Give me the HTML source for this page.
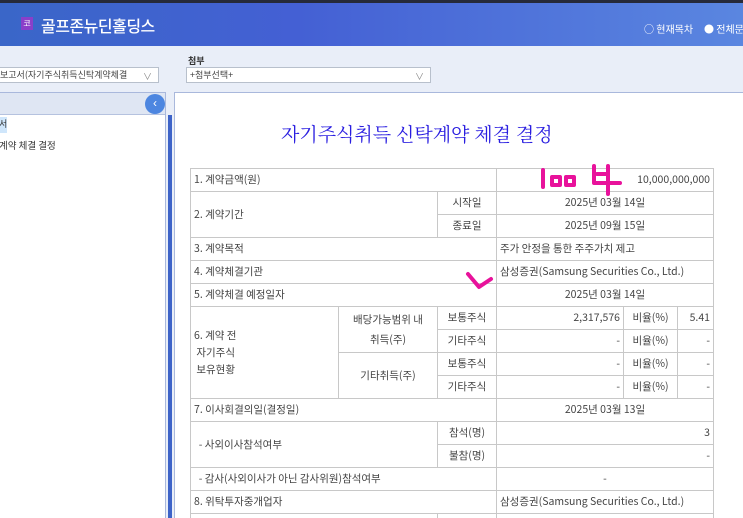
<!DOCTYPE html>
<html><head><meta charset="utf-8"><style>
*{margin:0;padding:0;box-sizing:border-box}
html,body{width:743px;height:518px;overflow:hidden}
body{background:#e9eef8;font-family:"Liberation Sans","Noto Sans CJK KR",sans-serif;position:relative}
.top{position:absolute;left:0;top:0;width:743px;height:46px;background:linear-gradient(90deg,#3a66c8 0%,#4460d4 40%,#5a86e0 100%);border-top:3px solid #262a3a}
.logo{position:absolute;left:21px;top:14px;width:12px;height:13px;background:#8a3fc9;color:#fff;font-size:8px;text-align:center;line-height:13px}
.ttl{position:absolute;left:41px;top:10px;color:#fff;font-size:16px;font-family:"Noto Sans CJK KR",sans-serif;font-weight:500;letter-spacing:-0.5px}
.rad{position:absolute;top:18px;color:#fff;font-size:10px;font-family:"Noto Sans CJK KR",sans-serif;white-space:nowrap}
.sel{position:absolute;background:#fff;border:1px solid #b8c0cc;height:16px;font-size:9px;color:#444;line-height:14px;padding-left:3px;font-family:"Noto Sans CJK KR",sans-serif;white-space:nowrap;overflow:hidden}
.sel i{position:absolute;right:6px;top:2px;font-style:normal;color:#888;font-size:9px}
.lp{position:absolute;left:-2px;top:92px;width:168px;height:430px;background:#fff;border:1px solid #a9b8dc}
.lph{height:22px;background:#dfe6f3;border-bottom:1px solid #b5c2df}
.cp{position:absolute;left:174px;top:92px;width:575px;height:430px;background:#fff;border:1px solid #a9b8dc}
table{position:absolute;left:190px;top:168px;border-collapse:collapse;font-family:"Noto Sans CJK KR",sans-serif;font-size:10.5px;color:#444}
td{border:1px solid #c8c8c8;height:23px;padding:0 3px;white-space:nowrap;line-height:12px}
.r{text-align:right}.c{text-align:center}
</style></head><body>
<div class="top">
<div class="logo">코</div>
<div class="ttl">골프존뉴딘홀딩스</div>
<div class="rad" style="left:644px">○ 현재목차</div>
<div class="rad" style="left:704px">● 전체문</div>
</div>
<div style="position:absolute;left:188px;top:54px;font-size:9px;font-weight:bold;color:#333;font-family:'Noto Sans CJK KR',sans-serif">첨부</div>
<div class="sel" style="left:-4px;top:67px;width:163px">보고서(자기주식취득신탁계약체결<i>∨</i></div>
<div class="sel" style="left:186px;top:67px;width:245px">+첨부선택+<i>∨</i></div>
<div class="lp"><div class="lph"></div>
<div style="position:absolute;left:0;top:24px;width:8px;height:16px;background:#cfe6fb;font-size:9px;color:#333">서</div>
<div style="position:absolute;left:0;top:45px;font-size:9.5px;color:#333;font-family:'Noto Sans CJK KR',sans-serif">계약 체결 결정</div>
</div>
<div style="position:absolute;left:145px;top:94px;width:20px;height:20px;border-radius:50%;background:#4d86e0;color:#fff;font-size:12px;text-align:center;line-height:19px">‹</div>
<div style="position:absolute;left:168px;top:115px;width:4px;height:403px;background:#3d63c8"></div>
<div class="cp"></div>
<div style="position:absolute;left:281px;top:120px;color:#2a1ee0;font-size:19px;font-family:'Noto Serif CJK SC','Noto Sans CJK KR',serif">자기주식취득 신탁계약 체결 결정</div>
<table>
<colgroup><col style="width:148px"><col style="width:99px"><col style="width:59px"><col style="width:127px"><col style="width:54px"><col style="width:36px"></colgroup>
<tr><td colspan="3">1. 계약금액(원)</td><td colspan="3" class="r">10,000,000,000</td></tr>
<tr><td colspan="2" rowspan="2">2. 계약기간</td><td class="c">시작일</td><td colspan="3" class="c">2025년 03월 14일</td></tr>
<tr><td class="c">종료일</td><td colspan="3" class="c">2025년 09월 15일</td></tr>
<tr><td colspan="3">3. 계약목적</td><td colspan="3">주가 안정을 통한 주주가치 제고</td></tr>
<tr><td colspan="3">4. 계약체결기관</td><td colspan="3">삼성증권(Samsung Securities Co., Ltd.)</td></tr>
<tr><td colspan="3">5. 계약체결 예정일자</td><td colspan="3" class="c">2025년 03월 14일</td></tr>
<tr><td rowspan="4" style="line-height:17px">6. 계약 전<br>&nbsp;자기주식<br>&nbsp;보유현황</td><td rowspan="2" class="c" style="line-height:20px">배당가능범위 내<br>취득(주)</td><td class="c">보통주식</td><td class="r">2,317,576</td><td class="c">비율(%)</td><td class="r">5.41</td></tr>
<tr><td class="c">기타주식</td><td class="r">-</td><td class="c">비율(%)</td><td class="r">-</td></tr>
<tr><td rowspan="2" class="c">기타취득(주)</td><td class="c">보통주식</td><td class="r">-</td><td class="c">비율(%)</td><td class="r">-</td></tr>
<tr><td class="c">기타주식</td><td class="r">-</td><td class="c">비율(%)</td><td class="r">-</td></tr>
<tr><td colspan="3">7. 이사회결의일(결정일)</td><td colspan="3" class="c">2025년 03월 13일</td></tr>
<tr><td colspan="2" rowspan="2">&nbsp;&nbsp;- 사외이사참석여부</td><td class="c">참석(명)</td><td colspan="3" class="r">3</td></tr>
<tr><td class="c">불참(명)</td><td colspan="3" class="r">-</td></tr>
<tr><td colspan="3">&nbsp;&nbsp;- 감사(사외이사가 아닌 감사위원)참석여부</td><td colspan="3" class="c">-</td></tr>
<tr><td colspan="3">8. 위탁투자중개업자</td><td colspan="3">삼성증권(Samsung Securities Co., Ltd.)</td></tr>
<tr><td colspan="2"></td><td></td><td colspan="3"></td></tr>
</table>
<svg style="position:absolute;left:0;top:0" width="743" height="518" fill="none" stroke="#e8129b" stroke-width="4" stroke-linecap="round" stroke-linejoin="round">
<path d="M543 170V187"/>
<path d="M552 177h8v8h-8z"/>
<path d="M566 177h8v8h-8z"/>
<path d="M594 166v17h14M608 166v28M597 174h11M608 183h12"/>
<path d="M468 274l11 13 12-8"/>
</svg>
</body></html>
